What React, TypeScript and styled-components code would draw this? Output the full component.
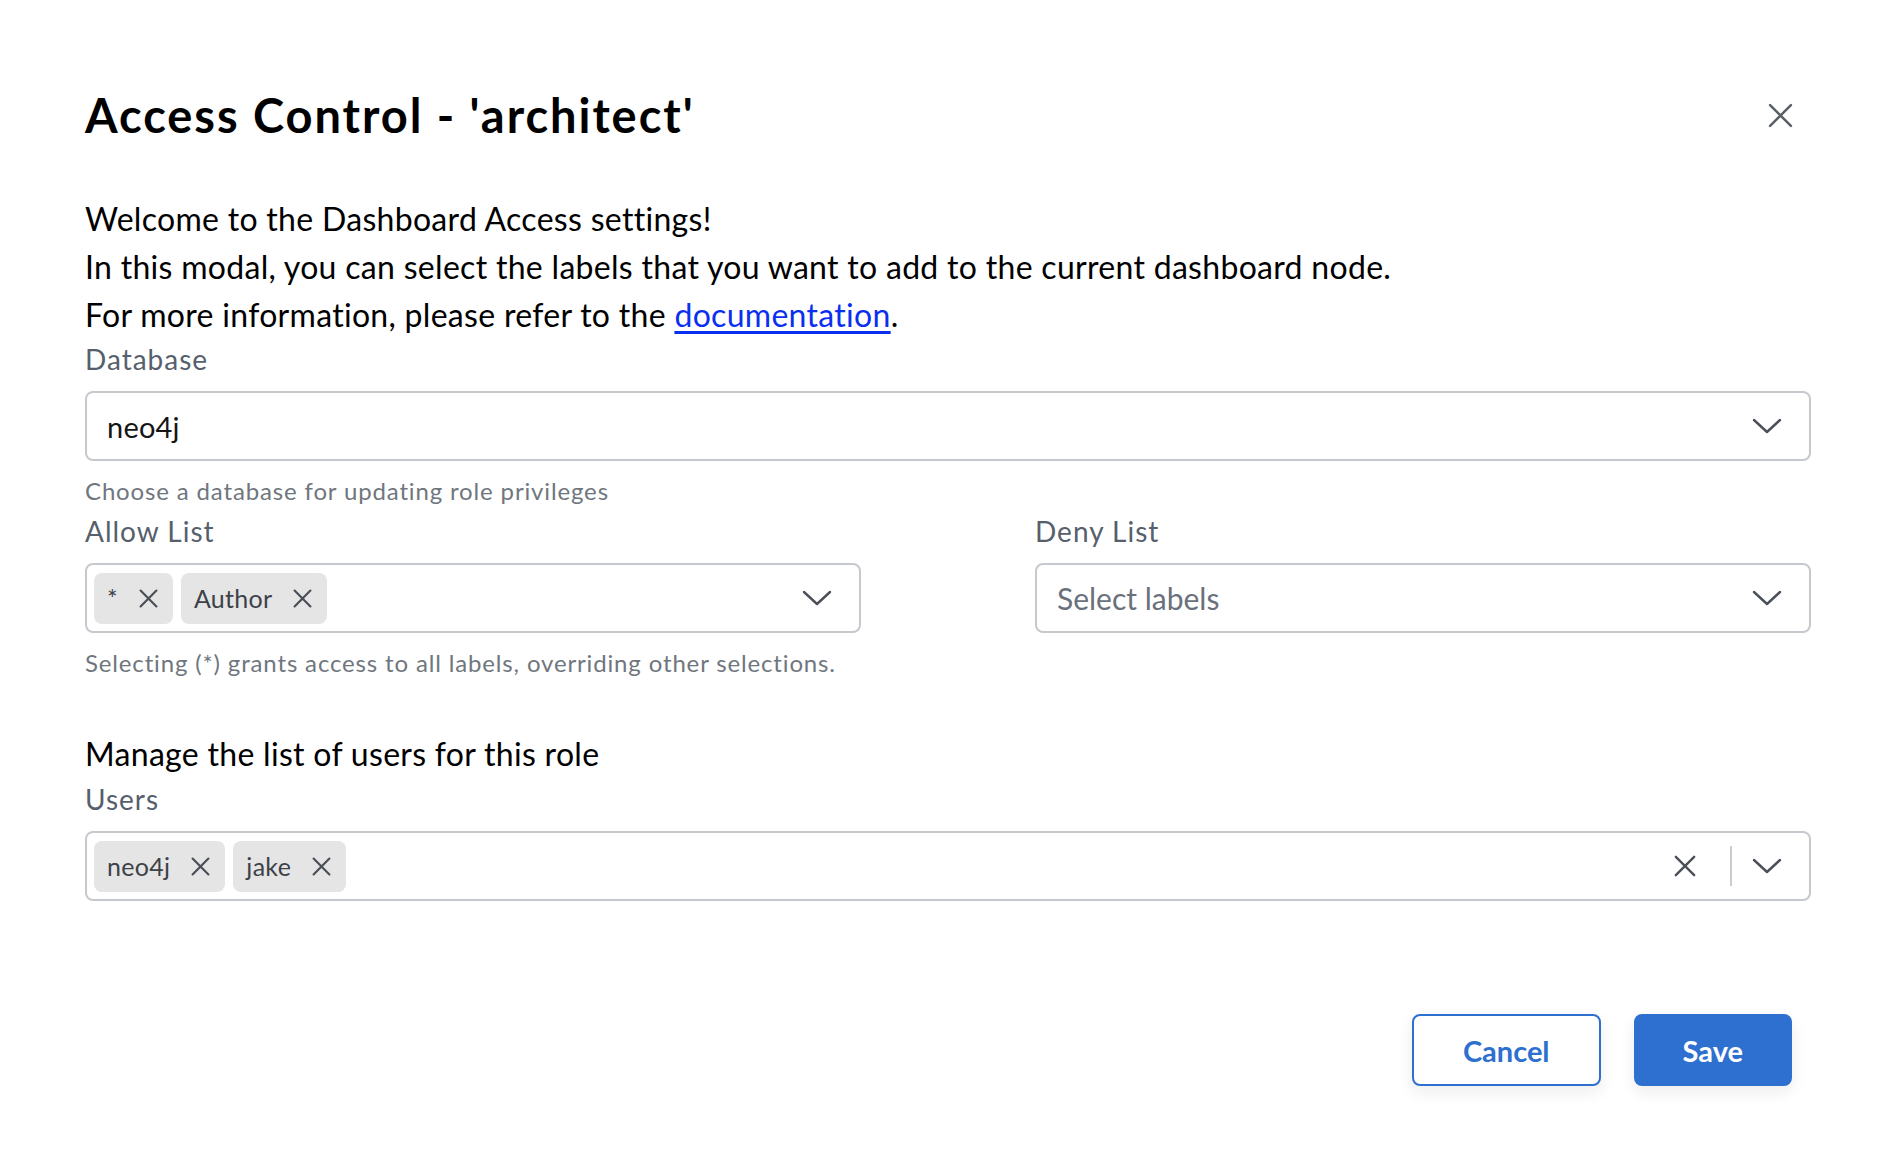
import React from "react";
import styled, { createGlobalStyle } from "styled-components";

const GlobalStyle = createGlobalStyle`
    html, body {
        margin: 0;
        padding: 0;
        background: #ffffff;
    }
    body {
        font-family: Lato, "Open Sans", Arial, sans-serif;
        color: #000000;
    }
    * {
        box-sizing: border-box;
    }
`;

const Page = styled.div`
    width: 1890px;
    min-height: 1158px;
    padding: 85px 79px 0px 85px;
    background: #ffffff;
`;

const Header = styled.div`
    display: flex;
    align-items: center;
    justify-content: space-between;
    height: 60px;
`;

const Title = styled.h1`
    margin: 0;
    font-size: 47px;
    line-height: 60px;
    font-weight: 700;
    letter-spacing: 1.95px;
    color: #000000;
`;

const CloseButton = styled.button`
    width: 62px;
    height: 62px;
    display: flex;
    align-items: center;
    justify-content: center;
    border: none;
    background: transparent;
    padding: 0;
    color: #5a5f66;
    cursor: pointer;
`;

const Intro = styled.div`
    margin-top: 50px;
`;

const Paragraph = styled.p`
    margin: 0;
    font-size: 32px;
    line-height: 48px;
    letter-spacing: 0.3px;
    color: #000000;
`;

const DocLink = styled.a`
    color: #0b2ff0;
    text-decoration: underline;
    text-underline-offset: 4px;
`;

const Field = styled.div<{ $top?: number }>`
    margin-top: ${(p) => p.$top ?? 0}px;
    display: flex;
    flex-direction: column;
`;

const Label = styled.label`
    font-size: 28px;
    line-height: 40px;
    letter-spacing: 1px;
    color: #56606c;
    margin-bottom: 12px;
`;

const SelectBox = styled.div`
    width: 100%;
    height: 70px;
    display: flex;
    align-items: center;
    border: 2px solid #c5c9cd;
    border-radius: 8px;
    background: #ffffff;
`;

const ValueArea = styled.div<{ $chips?: boolean }>`
    flex: 1;
    display: flex;
    align-items: center;
    gap: 8px;
    padding-left: ${(p) => (p.$chips ? 7 : 20)}px;
    font-size: 30px;
    color: #151515;
`;

const Value = styled.span`
    font-size: 29px;
    letter-spacing: 0.2px;
`;

const Placeholder = styled.span`
    color: #6a717b;
`;

const Chip = styled.div`
    height: 51px;
    display: flex;
    align-items: center;
    gap: 21px;
    padding: 0px 15px 0px 13px;
    border-radius: 8px;
    background: #e5e5e5;
    font-size: 25px;
    letter-spacing: 0.3px;
    color: #3d4249;
`;

const ChipRemove = styled.span`
    display: flex;
    color: #4b5058;
`;

const Indicators = styled.div`
    display: flex;
    align-items: center;
    padding-right: 27px;
    color: #4b5058;
`;

const ClearButton = styled.span`
    display: flex;
    margin-right: 34px;
`;

const Divider = styled.span`
    width: 2px;
    height: 40px;
    background: #c9ccd0;
    margin-right: 20px;
`;

const Helper = styled.div`
    margin-top: 12px;
    font-size: 24px;
    line-height: 36px;
    letter-spacing: 0.85px;
    color: #70767e;
`;

const Columns = styled.div`
    margin-top: 2px;
    display: flex;
    justify-content: space-between;
`;

const Column = styled.div`
    width: 776px;
    display: flex;
    flex-direction: column;
`;

const SectionTitle = styled.p`
    margin: 49px 0px 0px 0px;
    font-size: 32px;
    line-height: 48px;
    letter-spacing: 0.3px;
    color: #000000;
`;

const Footer = styled.div`
    margin-top: 113px;
    padding-right: 19px;
    display: flex;
    justify-content: flex-end;
    gap: 33px;
`;

const Button = styled.button<{ $primary?: boolean }>`
    height: 72px;
    padding: 0px ${(p) => (p.$primary ? 47 : 49)}px;
    border-radius: 8px;
    border: 2px solid #2e70cf;
    background: ${(p) => (p.$primary ? "#2e70cf" : "#ffffff")};
    color: ${(p) => (p.$primary ? "#ffffff" : "#2e70cf")};
    font-family: Lato, "Open Sans", Arial, sans-serif;
    font-size: 29px;
    font-weight: 700;
    box-shadow: 0px 6px 16px rgba(20, 30, 50, 0.08);
    cursor: pointer;
`;

function XIcon({ size, stroke = 2.2 }: { size: number; stroke?: number }) {
    return (
        <svg width={size} height={size} viewBox="0 0 24 24" fill="none">
            <path
                d="M2 2 L22 22 M22 2 L2 22"
                stroke="currentColor"
                strokeWidth={stroke}
                strokeLinecap="round"
                vectorEffect="non-scaling-stroke"
            />
        </svg>
    );
}

function Chevron() {
    return (
        <svg width="30" height="16" viewBox="0 0 30 16" fill="none">
            <path
                d="M2 2 L15 14 L28 2"
                stroke="currentColor"
                strokeWidth="2.4"
                strokeLinecap="round"
                strokeLinejoin="round"
            />
        </svg>
    );
}

function Tag({ text }: { text: string }) {
    return (
        <Chip>
            <span>{text}</span>
            <ChipRemove>
                <XIcon size={19} stroke={2.2} />
            </ChipRemove>
        </Chip>
    );
}

export default function App() {
    return (
        <>
            <GlobalStyle />
            <Page>
                <Header>
                    <Title>Access Control - 'architect'</Title>
                    <CloseButton aria-label="close">
                        <XIcon size={25} stroke={2.5} />
                    </CloseButton>
                </Header>

                <Intro>
                    <Paragraph>Welcome to the Dashboard Access settings!</Paragraph>
                    <Paragraph>
                        In this modal, you can select the labels that you want to add to the current dashboard node.
                    </Paragraph>
                    <Paragraph>
                        For more information, please refer to the <DocLink href="#">documentation</DocLink>.
                    </Paragraph>
                </Intro>

                <Field>
                    <Label>Database</Label>
                    <SelectBox>
                        <ValueArea>
                            <Value>neo4j</Value>
                        </ValueArea>
                        <Indicators>
                            <Chevron />
                        </Indicators>
                    </SelectBox>
                    <Helper>Choose a database for updating role privileges</Helper>
                </Field>

                <Columns>
                    <Column>
                        <Label>Allow List</Label>
                        <SelectBox>
                            <ValueArea $chips>
                                <Tag text="*" />
                                <Tag text="Author" />
                            </ValueArea>
                            <Indicators>
                                <Chevron />
                            </Indicators>
                        </SelectBox>
                        <Helper>Selecting (*) grants access to all labels, overriding other selections.</Helper>
                    </Column>
                    <Column>
                        <Label>Deny List</Label>
                        <SelectBox>
                            <ValueArea>
                                <Placeholder>Select labels</Placeholder>
                            </ValueArea>
                            <Indicators>
                                <Chevron />
                            </Indicators>
                        </SelectBox>
                    </Column>
                </Columns>

                <SectionTitle>Manage the list of users for this role</SectionTitle>
                <Field $top={1}>
                    <Label>Users</Label>
                    <SelectBox>
                        <ValueArea $chips>
                            <Tag text="neo4j" />
                            <Tag text="jake" />
                        </ValueArea>
                        <Indicators>
                            <ClearButton>
                                <XIcon size={22} stroke={2.4} />
                            </ClearButton>
                            <Divider />
                            <Chevron />
                        </Indicators>
                    </SelectBox>
                </Field>

                <Footer>
                    <Button>Cancel</Button>
                    <Button $primary>Save</Button>
                </Footer>
            </Page>
        </>
    );
}
